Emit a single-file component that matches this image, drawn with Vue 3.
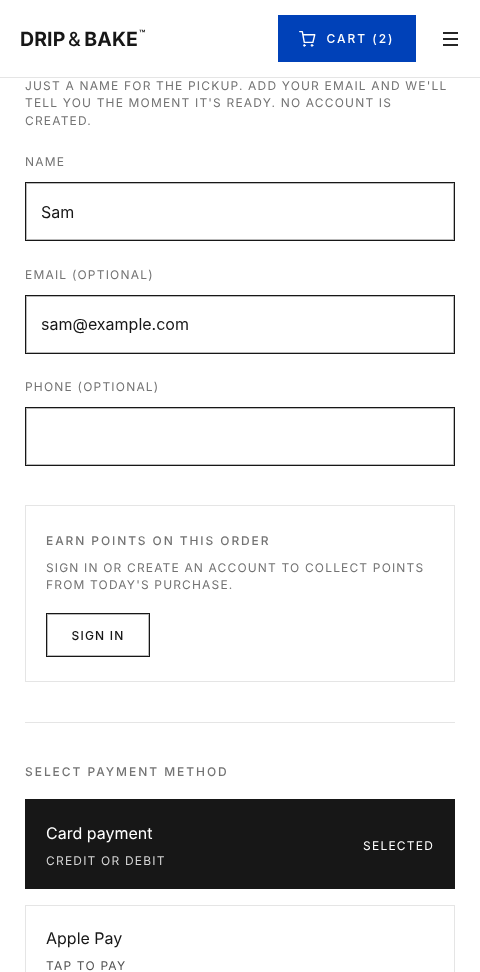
<script setup>
const fields = [
  { label: 'NAME', value: 'Sam' },
  { label: 'EMAIL (OPTIONAL)', value: 'sam@example.com' },
  { label: 'PHONE (OPTIONAL)', value: '' },
]
</script>

<template>
  <div class="page">
    <header class="top">
      <div class="logo">DRIP<span class="amp">&amp;</span>BAKE<sup class="tm">™</sup></div>
      <div class="top-right">
        <button class="cart">
          <svg width="18" height="18" viewBox="0 0 18 18" fill="none" stroke="#fff" stroke-width="1.4" stroke-linecap="round" stroke-linejoin="round">
            <path d="M.7 1.6h2.6l2 10.8h8.6l1.8-7.6H3.9" />
            <circle cx="5.4" cy="15.4" r=".9" fill="#fff" stroke-width=".8" />
            <circle cx="13" cy="15.4" r=".9" fill="#fff" stroke-width=".8" />
          </svg>
          <span>CART (2)</span>
        </button>
        <button class="menu" aria-label="Menu"><i></i><i></i><i></i></button>
      </div>
    </header>
    <main class="main">
      <p class="intro">JUST A NAME FOR THE PICKUP. ADD YOUR EMAIL AND WE'LL TELL YOU THE MOMENT IT'S READY. NO ACCOUNT IS CREATED.</p>
      <div class="fields">
        <label v-for="f in fields" :key="f.label" class="field">
          <span class="label">{{ f.label }}</span>
          <input class="input" :value="f.value" />
        </label>
      </div>
      <section class="points">
        <h3>EARN POINTS ON THIS ORDER</h3>
        <p>SIGN IN OR CREATE AN ACCOUNT TO COLLECT POINTS FROM TODAY'S PURCHASE.</p>
        <button class="signin">SIGN IN</button>
      </section>
      <hr class="rule" />
      <h3 class="pay-title">SELECT PAYMENT METHOD</h3>
      <div class="methods">
        <div class="method active">
          <div class="m-text">
            <div class="m-name">Card payment</div>
            <div class="m-sub">CREDIT OR DEBIT</div>
          </div>
          <span class="m-sel">SELECTED</span>
        </div>
        <div class="method">
          <div class="m-text">
            <div class="m-name">Apple Pay</div>
            <div class="m-sub">TAP TO PAY</div>
          </div>
        </div>
      </div>
    </main>
  </div>
</template>

<style>
html, body { margin: 0; background: #fff; }
</style>

<style scoped>
.page {
  height: 972px;
  overflow: hidden;
  font-family: Inter, "Liberation Sans", sans-serif;
  color: #171717;
  text-rendering: geometricPrecision;
}
.top {
  height: 77px;
  border-bottom: 1px solid #e5e5e5;
  display: flex;
  align-items: center;
  justify-content: space-between;
  padding: 0 22px 0 20px;
  will-change: transform;
}
.logo {
  font-size: 19.5px;
  font-weight: 700;
  letter-spacing: 0.1px;
  color: #171717;
  display: flex;
  align-items: center;
}
.amp { margin: 0 3.5px 0 2.5px; font-weight: 500; }
.tm { font-size: 10px; align-self: flex-start; line-height: 1; margin: 2px 0 0 1px; }
.top-right { display: flex; align-items: center; }
.cart {
  width: 138px;
  height: 47px;
  background: #0041b8;
  color: #fff;
  border: 0;
  padding: 0;
  display: flex;
  align-items: center;
  justify-content: center;
  gap: 9px;
  font: 500 12px Inter, sans-serif;
  letter-spacing: 2px;
}
.menu {
  margin-left: 27px;
  width: 15px;
  height: 14px;
  padding: 0;
  border: 0;
  background: none;
  display: flex;
  flex-direction: column;
  justify-content: space-between;
}
.menu i { display: block; height: 2px; background: #262626; }
.main { padding: 0 25px; will-change: transform; }
.intro {
  margin: -1px 0 0;
  font-size: 12px;
  line-height: 17.25px;
  letter-spacing: 1.17px;
  color: #737373;
}
.fields {
  margin-top: 24.25px;
  display: flex;
  flex-direction: column;
  gap: 24.5px;
}
.field { display: flex; flex-direction: column; gap: 12px; }
.label {
  font-size: 12px;
  line-height: 17px;
  letter-spacing: 1.2px;
  color: #737373;
}
.input {
  box-sizing: border-box;
  width: 100%;
  height: 59px;
  border: 1px solid #171717;
  box-shadow: inset 0 0 0 1px rgba(23, 23, 23, 0.3);
  border-radius: 0;
  padding: 0 15px;
  font: 400 16px Inter, sans-serif;
  color: #171717;
  outline: none;
  background: #fff;
}
.points {
  margin-top: 39px;
  box-sizing: border-box;
  height: 177px;
  border: 1px solid #e5e5e5;
  padding: 26px 20px 0;
}
.points h3 {
  margin: 0;
  font-size: 12px;
  font-weight: 500;
  line-height: 17px;
  letter-spacing: 1.9px;
  color: #737373;
}
.points p {
  margin: 10px 0 0;
  font-size: 12px;
  line-height: 17px;
  letter-spacing: 1.16px;
  color: #737373;
}
.signin {
  margin-top: 20px;
  width: 104px;
  height: 44px;
  background: #fff;
  border: 1px solid #171717;
  box-shadow: inset 0 0 0 1px rgba(23, 23, 23, 0.3);
  border-radius: 0;
  padding: 0;
  font: 500 12px Inter, sans-serif;
  letter-spacing: 1.2px;
  color: #171717;
}
.rule { margin: 40px 0 0; border: 0; border-top: 1px solid #e5e5e5; }
.pay-title {
  margin: 40px 0 0;
  font-size: 12px;
  font-weight: 500;
  line-height: 17px;
  letter-spacing: 1.95px;
  color: #737373;
}
.methods {
  margin-top: 19px;
  display: flex;
  flex-direction: column;
  gap: 16px;
}
.method {
  box-sizing: border-box;
  height: 90px;
  border: 1px solid #e5e5e5;
  padding: 0 20px;
  display: flex;
  align-items: center;
  justify-content: space-between;
}
.method.active { background: #171717; border-color: #171717; color: #fff; }
.m-text { padding-top: 1px; }
.active .m-text { padding-top: 3px; }
.m-name { font-size: 16px; line-height: 22px; font-weight: 400; }
.m-sub {
  margin-top: 7.5px;
  font-size: 12px;
  line-height: 17px;
  letter-spacing: 1.2px;
  color: #525252;
}
.active .m-sub { color: #d4d4d4; }
.m-sel { font-size: 12px; letter-spacing: 1.2px; font-weight: 400; padding-top: 2px; }
</style>
